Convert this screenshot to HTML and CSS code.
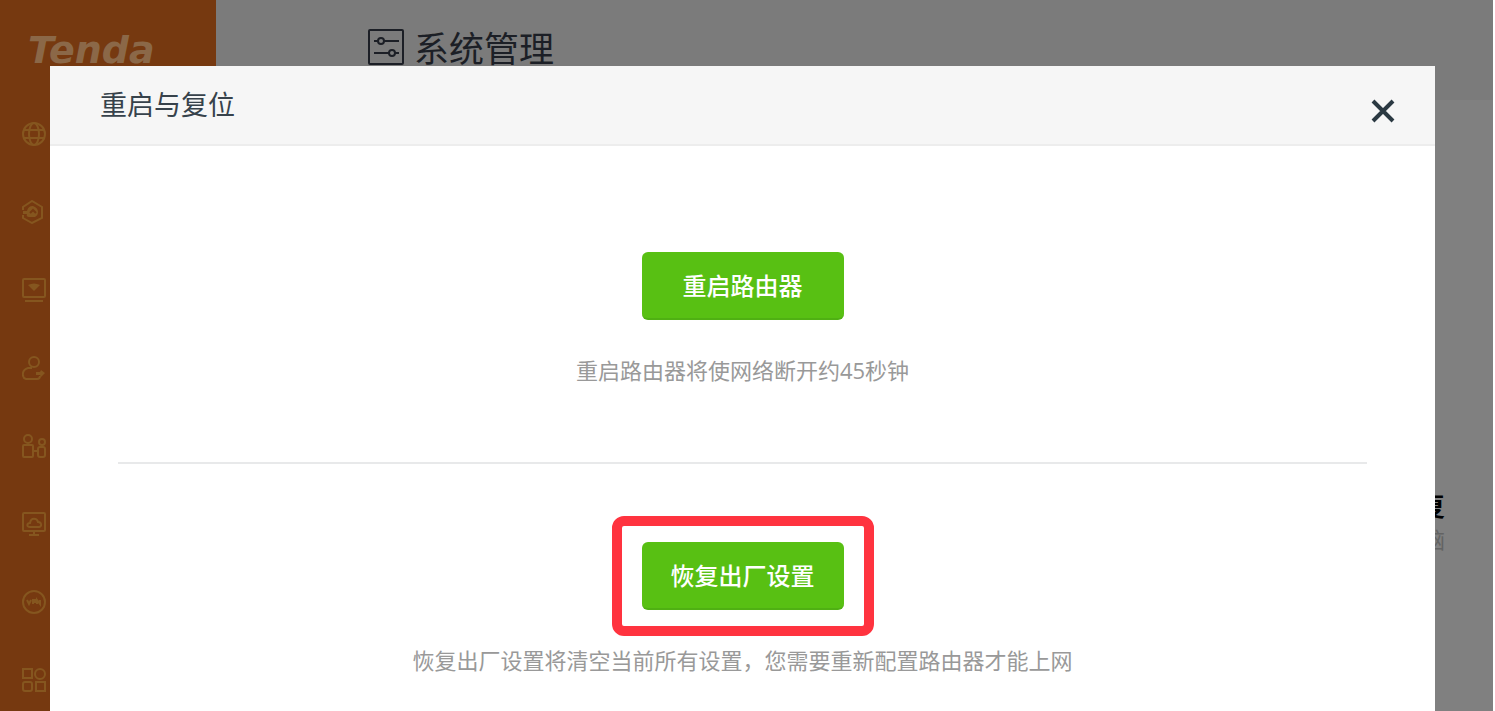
FILE: index.html
```html
<!DOCTYPE html>
<html lang="zh-CN">
<head>
  <meta charset="UTF-8">
  <title>Tenda - 系统管理</title>
  <meta name="viewport" content="width=device-width, initial-scale=1.0">
  <link rel="stylesheet" href="styles.css">
</head>
<body>

<div class="page">
  <nav class="sidebar">
    <a class="logo" href="#">Tenda</a>
    <a class="nav-item" href="#" aria-label="网络状态">
      <svg class="icon" viewBox="0 0 24 24"><circle cx="12" cy="12" r="11"/><ellipse cx="12" cy="12" rx="5" ry="11"/><path d="M2 8h20M2 16h20"/></svg>
    </a>
    <a class="nav-item" href="#" aria-label="外网设置">
      <svg class="icon" viewBox="0 0 24 24"><path d="M1 10V7l9-6 10 6v11l-10 5-9-5v-3"/><path class="solid" d="M1 11h4c1-4 3-5 6-5 3 1 5 3 5 6 0 2-1 4-3 5H7c-2 0-3-2-2-3H1z"/><path class="cut" d="M8 13l3-3 3 3"/></svg>
    </a>
    <a class="nav-item" href="#" aria-label="无线设置">
      <svg class="icon" viewBox="0 0 24 24"><rect x="1" y="1" width="22" height="18" rx="1"/><path d="M3 23h18"/><path class="solid" d="M6 7q6-3 12 0l-6 6z"/></svg>
    </a>
    <a class="nav-item" href="#" aria-label="访客网络">
      <svg class="icon" viewBox="0 0 24 24"><circle cx="12" cy="6" r="5"/><path d="M10 12H6c-7 2-6 10-2 11h11c2 0 3-1 3-3"/><path class="solid" d="M14 16h4l1-2 4 3-4 4-1-2h-4z"/></svg>
    </a>
    <a class="nav-item" href="#" aria-label="家长控制">
      <svg class="icon" viewBox="0 0 24 24"><circle cx="6" cy="5" r="4"/><rect x="1" y="11" width="10" height="12" rx="1"/><circle cx="20" cy="8" r="3"/><rect x="16" y="13" width="7" height="10" rx="2"/><path d="M11 17h5"/></svg>
    </a>
    <a class="nav-item" href="#" aria-label="云管理">
      <svg class="icon" viewBox="0 0 24 24"><rect x="1" y="1" width="22" height="18" rx="1"/><path d="M8 15c-4 0-3-4 0-4 1-6 7-5 8-1 4 0 4 5 1 5zM12 19v4M7 23h10"/></svg>
    </a>
    <a class="nav-item" href="#" aria-label="VPN">
      <svg class="icon" viewBox="0 0 24 24"><circle cx="12" cy="12" r="11"/><path d="M5 10l2 4 2-4M11 14v-4h2v2h-2M15 14v-4l3 4v-4"/></svg>
    </a>
    <a class="nav-item" href="#" aria-label="高级功能">
      <svg class="icon" viewBox="0 0 24 24"><rect x="1" y="1" width="9" height="9"/><circle cx="18" cy="6" r="5"/><rect x="1" y="14" width="9" height="9" rx="2"/><rect x="14" y="14" width="9" height="9"/></svg>
    </a>
  </nav>

  <main class="main">
    <header class="header">
      <svg class="header-icon" viewBox="0 0 36 36"><rect x="1" y="1" width="34" height="34" rx="1"/><circle cx="13" cy="12" r="3"/><path d="M6 12h4M16 12h15M6 24h15M27 24h4"/><circle cx="24" cy="24" r="3"/></svg>
      <h1 class="header-title">系统管理</h1>
    </header>
    <section class="tiles">
      <div class="tile">
        <div class="tile-name">备份与恢复</div>
        <div class="tile-note">备份到电脑</div>
      </div>
    </section>
  </main>
</div>

<div class="overlay">
  <div class="dialog" role="dialog" aria-labelledby="dialog-title">
    <div class="dialog-head">
      <h2 class="dialog-title" id="dialog-title">重启与复位</h2>
      <button class="close" type="button" aria-label="关闭">
        <svg class="close-icon" viewBox="0 0 24 24"><path d="M2 2l20 20M22 2L2 22"/></svg>
      </button>
    </div>
    <div class="dialog-body">
      <div class="action">
        <div class="frame"><button class="btn" type="button">重启路由器</button></div>
        <p class="hint">重启路由器将使网络断开约45秒钟</p>
      </div>
      <hr class="divider">
      <div class="action">
        <div class="frame marked"><button class="btn" type="button">恢复出厂设置</button></div>
        <p class="hint">恢复出厂设置将清空当前所有设置，您需要重新配置路由器才能上网</p>
      </div>
    </div>
  </div>
</div>

</body>
</html>
```
FILE: styles.css
```css
* {
  box-sizing: border-box;
}

html, body {
  margin: 0;
  height: 100%;
  overflow: hidden;
}

body {
  font-family: "Open Sans", "Noto Sans CJK SC", sans-serif;
  background: #fff;
}

h1, h2, p {
  margin: 0;
  font-weight: normal;
}

.page {
  display: flex;
  height: 100%;
  padding-right: 2px;
}

/* sidebar */
.sidebar {
  flex: none;
  width: 216px;
  background: #763910;
  overflow: hidden;
}

.logo {
  display: block;
  height: 95px;
  padding: 26px 0 0 28px;
  font: italic bold 38px/48px "DejaVu Sans", sans-serif;
  color: #8b6848;
  text-decoration: none;
}

.nav-item {
  display: flex;
  align-items: center;
  height: 78px;
  padding-left: 22px;
}

.icon {
  width: 24px;
  height: 24px;
  fill: none;
  stroke: #85561f;
  stroke-width: 2;
}

.icon .solid {
  fill: #85561f;
  stroke: none;
}

.icon .cut {
  stroke: #763910;
}

/* page behind the dialog */
.main {
  flex: 1;
  min-width: 0;
  background: #808080;
}

.header {
  display: flex;
  gap: 10px;
  height: 100px;
  padding: 24px 0 0 152px;
  background: #7b7b7b;
}

.header-icon {
  width: 36px;
  height: 46px;
  fill: none;
  stroke: #1c1f26;
  stroke-width: 2;
}

.header-title {
  font-size: 35px;
  line-height: 50px;
  color: #1c1f26;
}

.tiles {
  display: flex;
  justify-content: flex-end;
  padding: 390px 48px 0 0;
}

.tile {
  text-align: right;
}

.tile-name {
  font-size: 26px;
  font-weight: bold;
  line-height: 32px;
  color: #000;
}

.tile-note {
  font-size: 22px;
  line-height: 34px;
  color: #636363;
}

/* dialog */
.overlay {
  position: fixed;
  inset: 0;
  padding: 66px 60px 0 50px;
}

.dialog {
  height: 100%;
  background: #fff;
}

.dialog-head {
  display: flex;
  justify-content: space-between;
  height: 80px;
  padding: 0 40px 0 50px;
  background: #f6f6f6;
  border-bottom: 2px solid #ededed;
}

.dialog-title {
  font-size: 27px;
  line-height: 78px;
  color: #37424b;
}

.close {
  padding: 12px 0 0;
  border: 0;
  background: none;
  cursor: pointer;
}

.close-icon {
  display: block;
  width: 24px;
  height: 24px;
  fill: none;
  stroke: #2b3942;
  stroke-width: 4;
}

.dialog-body {
  padding: 80px 68px 0;
}

.action {
  display: flex;
  flex-direction: column;
  align-items: center;
}

.frame {
  padding: 16px 20px;
  border: 10px solid transparent;
  border-radius: 12px;
}

.marked {
  border-color: #ff333f;
}

.btn {
  display: block;
  width: 202px;
  height: 68px;
  padding: 0 0 2px;
  border: 0;
  border-bottom: 2px solid #4fb013;
  border-radius: 6px;
  background: #58c013;
  color: #fff;
  font-family: inherit;
  font-size: 24px;
  font-weight: 500;
  cursor: pointer;
}

.hint {
  padding-top: 8px;
  font-size: 22px;
  line-height: 32px;
  color: #999;
}

.divider {
  height: 2px;
  margin: 76px 0 52px;
  border: 0;
  background: #e8e9ea;
}
```
